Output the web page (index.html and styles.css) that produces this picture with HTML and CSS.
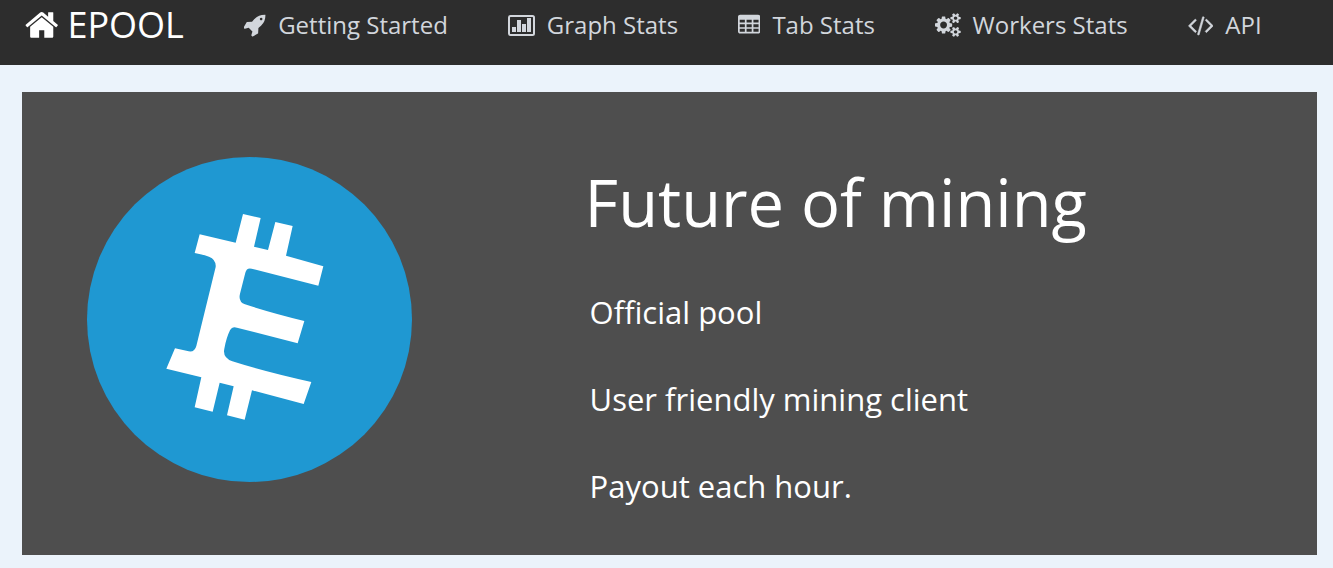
FILE: index.html
```
<!DOCTYPE html>
<html lang="en">
<head>
    <meta charset="UTF-8">
    <meta name="viewport" content="width=device-width, initial-scale=1.0">
    <title>EPOOL</title>
    <link rel="stylesheet" href="styles.css">
</head>
<body>
    <nav class="navbar">
        <a class="brand" href="#">
            <svg class="icon-home" viewBox="64 0 1664 1792" aria-hidden="true"><path d="M1472 992v480q0 26-19 45t-45 19h-384v-384h-256v384h-384q-26 0-45-19t-19-45v-480q0-1 .5-3t.5-3l575-474 575 474q1 2 1 6zm223-69l-62 74q-8 9-21 11h-3q-13 0-21-7l-692-577-692 577q-12 8-24 7-13-2-21-11l-62-74q-8-10-7-23.500t11-21.500l719-599q32-26 76-26t76 26l244 204v-195q0-14 9-23t23-9h192q14 0 23 9t9 23v408l219 182q10 8 11 21.500t-7 23.500z"/></svg>
            <span>EPOOL</span>
        </a>
        <ul class="menu">
            <li><a href="#start">
                <svg class="icon" viewBox="64 0 1664 1792" aria-hidden="true"><path d="M1440 448q0-40-28-68t-68-28-68 28-28 68 28 68 68 28 68-28 28-68zm224-288q0 249-75.500 430.500t-253.500 360.500q-81 80-195 176l-20 379q-2 16-16 26l-384 224q-7 4-16 4-12 0-23-9l-64-64q-13-14-8-32l85-276-281-281-276 85q-3 1-9 1-14 0-23-9l-64-64q-17-19-5-39l224-384q10-14 26-16l379-20q96-114 176-195 188-187 358-258t431-71q14 0 24 9.500t10 22.500z"/></svg>
                <span>Getting Started</span>
            </a></li>
            <li><a href="#graph">
                <svg class="icon" viewBox="0 0 27 24" aria-hidden="true">
                    <rect x="1" y="3" width="25" height="19" rx="1.500" fill="none" stroke="currentColor" stroke-width="2"/>
                    <path d="M4 14h4v5h-4zM9 7h4v12h-4zM14 11h4v8h-4zM19 5h4v14h-4z"/>
                </svg>
                <span>Graph Stats</span>
            </a></li>
            <li><a href="#tab">
                <svg class="icon" viewBox="64 0 1664 1792" aria-hidden="true"><path fill-rule="evenodd" d="M224 128h1344q66 0 113 47t47 113v1088q0 66-47 113t-113 47h-1344q-66 0-113-47t-47-113v-1088q0-66 47-113t113-47zM192 512v192h384v-192zM704 512v192h384v-192zM1216 512v192h384v-192zM192 832v224h384v-224zM704 832v224h384v-224zM1216 832v224h384v-224zM192 1184v224h384v-224zM704 1184v224h384v-224zM1216 1184v224h384v-224z"/></svg>
                <span>Tab Stats</span>
            </a></li>
            <li><a href="#workers">
                <svg class="icon" viewBox="0 0 1920 1792" aria-hidden="true"><path d="M896 896q0-106-75-181t-181-75-181 75-75 181 75 181 181 75 181-75 75-181zm768 512q0-52-38-90t-90-38-90 38-38 90q0 53 37.500 90.500t90.500 37.500 90.500-37.500 37.500-90.500zm0-1024q0-52-38-90t-90-38-90 38-38 90q0 53 37.500 90.500t90.500 37.500 90.500-37.500 37.500-90.500zm-384 421v185q0 10-7 19.500t-16 10.500l-155 24q-11 35-32 76 34 48 90 115 7 11 7 20 0 12-7 19-23 30-82.500 89.500t-78.500 59.500q-11 0-21-7l-115-90q-37 19-77 31-11 108-23 155-7 24-30 24h-186q-11 0-20-7.500t-10-17.500l-23-153q-34-10-75-31l-118 89q-7 7-20 7-11 0-21-8-144-133-144-160 0-9 7-19 10-14 41-53t47-61q-23-44-35-82l-152-24q-10-1-17-9.500t-7-19.500v-185q0-10 7-19.500t16-10.500l155-24q11-35 32-76-34-48-90-115-7-11-7-20 0-12 7-20 22-30 82-89t79-59q11 0 21 7l115 90q34-18 77-32 11-108 23-154 7-24 30-24h186q11 0 20 7.500t10 17.500l23 153q34 10 75 31l118-89q8-7 20-7 11 0 21 8 144 133 144 160 0 8-7 19-12 16-42 54t-45 60q23 48 34 82l152 23q10 2 17 10.500t7 19.500zm640 533v140q0 16-149 31-12 27-30 52 51 113 51 138 0 4-4 7-122 71-124 71-8 0-46-47t-52-68q-20 2-30 2t-30-2q-14 21-52 68t-46 47q-2 0-124-71-4-3-4-7 0-25 51-138-18-25-30-52-149-15-149-31v-140q0-16 149-31 13-29 30-52-51-113-51-138 0-4 4-7 4-2 35-20t59-34 30-16q8 0 46 46.500t52 67.500q20-2 30-2t30 2q51-71 92-112l6-2q4 0 124 70 4 3 4 7 0 25-51 138 17 23 30 52 149 15 149 31zm0-1024v140q0 16-149 31-12 27-30 52 51 113 51 138 0 4-4 7-122 71-124 71-8 0-46-47t-52-68q-20 2-30 2t-30-2q-14 21-52 68t-46 47q-2 0-124-71-4-3-4-7 0-25 51-138-18-25-30-52-149-15-149-31v-140q0-16 149-31 13-29 30-52-51-113-51-138 0-4 4-7 4-2 35-20t59-34 30-16q8 0 46 46.500t52 67.500q20-2 30-2t30 2q51-71 92-112l6-2q4 0 124 70 4 3 4 7 0 25-51 138 17 23 30 52 149 15 149 31z"/></svg>
                <span>Workers Stats</span>
            </a></li>
            <li><a href="#api">
                <svg class="icon" viewBox="0 0 1920 1792" aria-hidden="true"><path stroke="currentColor" stroke-width="40" d="M617 1399l-50 50q-10 10-23 10t-23-10l-466-466q-10-10-10-23t10-23l466-466q10-10 23-10t23 10l50 50q10 10 10 23t-10 23l-393 393 393 393q10 10 10 23t-10 23zm591-1067l-373 1291q-4 13-15.500 19.500t-23.500 2.500l-62-17q-13-4-19.500-15.500t-2.500-24.500l373-1291q4-13 15.500-19.500t23.500-2.500l62 17q13 4 19.500 15.500t2.500 24.500zm657 651l-466 466q-10 10-23 10t-23-10l-50-50q-10-10-10-23t10-23l393-393-393-393q-10-10-10-23t10-23l50-50q10-10 23-10t23 10l466 466q10 10 10 23t-10 23z"/></svg>
                <span>API</span>
            </a></li>
        </ul>
    </nav>

    <main class="hero">
        <div class="hero-logo">
            <svg class="coin" viewBox="0 0 975 975" role="img" aria-label="EPOOL coin">
                <circle cx="487.500" cy="487.500" r="487.500" fill="#1f98d2"/>
                <path fill="#fff" d="M468 171L521 183 501 269 543 279 565 195 617 207 597 296 709 328 694 386L494 335Q479 331 475 347L459 410Q453 435 474 442Q550 467 652 492L632 559L450 512Q436 507 429 520Q418 542 412 575Q406 602 436 613Q540 646 673 675L650 741L495 700L473 788L420 775L440 688L398 677L377 764L323 751L343 661L238 635L264 574L305 583Q323 586 328 567L386 330Q388 308 366 299Q350 293 323 288L338 232L446 257Z"/>
            </svg>
        </div>
        <div class="hero-text">
            <h1>Future of mining</h1>
            <p>Official pool</p>
            <p>User friendly mining client</p>
            <p>Payout each hour.</p>
        </div>
    </main>
</body>
</html>
```
FILE: styles.css
```
* {
    box-sizing: border-box;
}

body {
    margin: 0;
    background-color: #ebf3fb;
    font-family: "Open Sans", "Noto Sans", sans-serif;
}

.navbar {
    display: flex;
    align-items: center;
    gap: 60px;
    padding: 0 25px 16px;
    background-color: #2d2d2d;
}

.navbar a {
    display: flex;
    align-items: center;
    white-space: nowrap;
    text-decoration: none;
}

.navbar svg {
    fill: currentColor;
}

.brand {
    gap: 9px;
    color: #fff;
    font-size: 36px;
    line-height: 49px;
}

.icon-home {
    height: 36px;
}

.menu {
    display: flex;
    gap: 60px;
    margin: 0;
    padding: 0;
    list-style: none;
}

.menu a {
    gap: 12px;
    color: #d2d6dc;
    font-size: 24px;
    line-height: 33px;
}

.menu a:hover {
    color: #fff;
}

.icon {
    height: 24px;
}

.hero {
    display: grid;
    grid-template-columns: 5fr 7fr;
    margin: 27px 16px 13px 22px;
    padding: 65px 0 47px;
    background-color: #4e4e4e;
    color: #fff;
}

.hero-logo {
    padding-left: 65px;
}

.coin {
    display: block;
    width: 325px;
    max-width: 100%;
}

.hero-text {
    padding-left: 23px;
}

.hero-text h1 {
    margin: 0;
    font-size: 65px;
    font-weight: 400;
    line-height: 90px;
}

.hero-text p {
    margin: 43px 0 0 5px;
    font-size: 31px;
    line-height: 44px;
}
```
